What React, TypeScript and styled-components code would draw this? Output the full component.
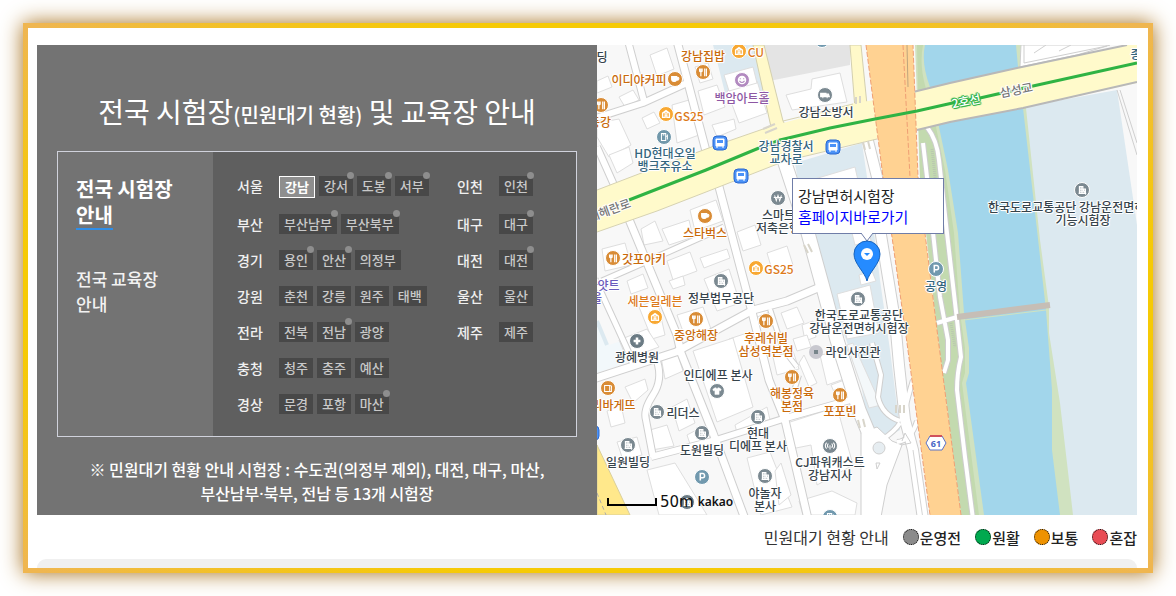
import React from "react";
import styled, { createGlobalStyle, css } from "styled-components";

const GlobalStyle = createGlobalStyle`
  * { box-sizing: border-box; }
  body {
    margin: 0;
    background: #fff;
    color: #333;
    font-family: "Noto Sans CJK KR", "Noto Sans", sans-serif;
  }
`;

const Frame = styled.main`
  margin: 23px;
  padding: 17px 11px 0 9px;
  border: 5px solid transparent;
  background:
    linear-gradient(#fff, #fff) padding-box,
    radial-gradient(ellipse farthest-corner, #f6ca05 71%, #efb650 98%) border-box;
  box-shadow: 0 0 20px #a56e19;
`;

const Columns = styled.div`
  display: grid;
  grid-template-columns: 28fr 27fr;
`;

const Panel = styled.section`
  padding: 45px 20px 10px;
  background: #737373;
  color: #fff;
`;

const Title = styled.h1`
  margin: 0 0 19px;
  font-size: 28px;
  font-weight: 400;
  line-height: 42px;
  text-align: center;

  small {
    font-size: 20px;
    font-weight: 500;
    line-height: 20px;
  }
`;

const Board = styled.div`
  display: grid;
  grid-template-columns: 155px 1fr;
  min-height: 286px;
  border: 1px solid #d0d2dc;
`;

const SideNav = styled.nav`
  padding: 24px 18px;
`;

const SideLink = styled.a<{ $active?: boolean }>`
  display: block;
  margin-bottom: 36px;
  color: #f2f2f2;
  font-size: 17px;
  font-weight: 500;
  line-height: 25px;
  text-decoration: none;

  ${(p) =>
    p.$active &&
    css`
      color: #fff;
      font-size: 20px;
      font-weight: 700;
      line-height: 26px;

      span {
        display: inline-block;
        height: 28px;
        border-bottom: 2px solid #2f8ee8;
      }
    `}
`;

const Regions = styled.div`
  display: grid;
  grid-template-columns: 220px 1fr;
  align-content: start;
  row-gap: 16px;
  padding: 24px 0 16px 24px;
  background: #5f5f5f;
`;

const Region = styled.div<{ $column: number }>`
  grid-column: ${(p) => p.$column};
  display: flex;
  align-items: flex-start;
  gap: 4px;
`;

const RegionName = styled.strong`
  width: 38px;
  color: #f0f0f0;
  font-size: 14px;
  font-weight: 500;
  line-height: 20px;
`;

const Place = styled.button<{ $active?: boolean }>`
  position: relative;
  padding: 0 5px;
  border: ${(p) => (p.$active ? "1px solid #fff" : "0")};
  background: ${(p) => (p.$active ? "#8e8e8e" : "#484848")};
  color: ${(p) => (p.$active ? "#fff" : "#c9c9c9")};
  font-family: inherit;
  font-size: 13px;
  font-weight: ${(p) => (p.$active ? 700 : 500)};
  line-height: 20px;
  white-space: nowrap;
  cursor: pointer;
`;

const Dot = styled.i`
  position: absolute;
  top: -4px;
  right: -1px;
  width: 7px;
  height: 7px;
  border-radius: 50%;
  background: #8e8e8e;
`;

const Note = styled.p`
  margin: 20px 0 0;
  font-size: 16px;
  font-weight: 500;
  line-height: 24px;
  text-align: center;
`;

const MiddleDot = styled.span`
  font-family: "Noto Sans", sans-serif;
  line-height: 16px;
`;

const MapView = styled.section`
  position: relative;
  overflow: hidden;
  background: #f8f8f8;
`;

const MapDrawing = styled.svg`
  position: absolute;
  top: 0;
  left: 0;
`;

const tones = {
  dark: "#36434b",
  food: "#c96a0b",
  store: "#dd7a1a",
  teal: "#34657d",
  art: "#8d57a3",
  hotel: "#6a5bbb",
  road: "#777777",
  subway: "#ffffff",
};
type Tone = keyof typeof tones;

const MapLabel = styled.span<{ $x: number; $y: number; $tone: Tone; $turn?: number; $start?: boolean }>`
  --halo: ${(p) => (p.$tone === "subway" ? "#31b44a" : "#fff")};
  position: absolute;
  left: ${(p) => p.$x}px;
  top: ${(p) => p.$y}px;
  transform: translate(${(p) => (p.$start ? "0" : "-50%")}, -50%) rotate(${(p) => p.$turn ?? 0}deg);
  color: ${(p) => tones[p.$tone]};
  font-size: 12px;
  font-weight: 500;
  line-height: 13px;
  text-align: center;
  white-space: pre;
  text-shadow:
    1px 0 var(--halo),
    -1px 0 var(--halo),
    0 1px var(--halo),
    0 -1px var(--halo),
    1px 1px 1px var(--halo),
    -1px -1px 1px var(--halo);
`;

const Bubble = styled.div`
  position: absolute;
  top: 133px;
  left: 195px;
  width: 152px;
  padding: 6px 5px;
  border: 1px solid #6f7da8;
  background: #fff;
  color: #222;
  font-size: 15px;
  line-height: 21px;
  white-space: nowrap;

  a {
    display: block;
    color: #00f;
    text-decoration: none;
  }
`;

const Marker = styled.svg`
  position: absolute;
  top: 187px;
  left: 255px;
`;

const Scale = styled.div`
  position: absolute;
  left: 10px;
  bottom: 3px;
  display: flex;
  align-items: center;
  gap: 3px;
  color: #111;
  font-family: "DejaVu Sans", sans-serif;
  font-size: 15px;
  line-height: 20px;

  i {
    width: 50px;
    height: 8px;
    border: 2px solid #000;
    border-top: 0;
  }
  b {
    margin-left: 1px;
    font-family: "Noto Sans", sans-serif;
    font-size: 12px;
    font-weight: 600;
  }
`;

const Legend = styled.div`
  display: flex;
  justify-content: flex-end;
  align-items: center;
  gap: 14px;
  height: 44px;
  font-size: 16px;
`;

const LegendItem = styled.span<{ $color: string }>`
  display: flex;
  align-items: center;
  gap: 1px;
  color: #222;
  font-size: 15px;
  font-weight: 500;

  &::before {
    content: "";
    width: 14px;
    height: 14px;
    border: 1px dotted #000;
    border-radius: 50%;
    background: ${(p) => p.$color};
  }
`;

const NextSection = styled.div`
  height: 9px;
  border-radius: 10px 10px 0 0;
  background: #f0f0f0;
`;

type PlaceData = [name: string, dot?: boolean];
const regions: { name: string; column: number; places: PlaceData[] }[] = [
  { name: "서울", column: 1, places: [["강남"], ["강서", true], ["도봉", true], ["서부", true]] },
  { name: "인천", column: 2, places: [["인천", true]] },
  { name: "부산", column: 1, places: [["부산남부", true], ["부산북부", true]] },
  { name: "대구", column: 2, places: [["대구", true]] },
  { name: "경기", column: 1, places: [["용인", true], ["안산", true], ["의정부"]] },
  { name: "대전", column: 2, places: [["대전", true]] },
  { name: "강원", column: 1, places: [["춘천"], ["강릉"], ["원주"], ["태백"]] },
  { name: "울산", column: 2, places: [["울산"]] },
  { name: "전라", column: 1, places: [["전북"], ["전남", true], ["광양"]] },
  { name: "제주", column: 2, places: [["제주"]] },
  { name: "충청", column: 1, places: [["청주"], ["충주"], ["예산"]] },
  { name: "경상", column: 1, places: [["문경"], ["포항"], ["마산", true]] },
];

type LabelData = { t: string; x: number; y: number; c: Tone; turn?: number; start?: boolean };
const labels: LabelData[] = [
  { t: "딩", x: 5, y: 11, c: "dark" },
  { t: "강남집밥", x: 106, y: 10, c: "food" },
  { t: "CU", x: 159, y: 6, c: "store" },
  { t: "이디야커피", x: 42, y: 34, c: "food" },
  { t: "백암아트홀", x: 145, y: 52, c: "art" },
  { t: "등강", x: 3, y: 76, c: "food" },
  { t: "GS25", x: 92, y: 70, c: "store" },
  { t: "HD현대오일\n뱅크주유소", x: 68, y: 114, c: "teal" },
  { t: "강남경찰서\n교차로", x: 189, y: 107, c: "teal" },
  { t: "강남소방서", x: 229, y: 66, c: "dark" },
  { t: "삼성교", x: 419, y: 44, c: "road", turn: -11 },
  { t: "2호선", x: 369, y: 55, c: "subway", turn: -11 },
  { t: "종", x: 539, y: 8, c: "teal" },
  { t: "테헤란로", x: 12, y: 164, c: "road", turn: -20 },
  { t: "스마트", x: 165, y: 169, c: "dark", start: true },
  { t: "저축은행", x: 159, y: 182, c: "dark", start: true },
  { t: "스타벅스", x: 108, y: 187, c: "food" },
  { t: "갓포아키", x: 47, y: 213, c: "food" },
  { t: "하얏트", x: 6, y: 239, c: "hotel" },
  { t: "서울", x: -6, y: 252, c: "hotel" },
  { t: "세븐일레븐", x: 58, y: 255, c: "store" },
  { t: "정부법무공단", x: 124, y: 252, c: "dark" },
  { t: "GS25", x: 182, y: 223, c: "store" },
  { t: "중앙해장", x: 99, y: 289, c: "food" },
  { t: "후레쉬빌\n삼성역본점", x: 169, y: 299, c: "food" },
  { t: "광혜병원", x: 40, y: 311, c: "dark" },
  { t: "한국도로교통공단\n강남운전면허시험장", x: 262, y: 276, c: "dark" },
  { t: "라인사진관", x: 256, y: 306, c: "dark" },
  { t: "인디에프 본사", x: 121, y: 329, c: "dark" },
  { t: "파리바게뜨", x: 11, y: 359, c: "food" },
  { t: "리더스", x: 86, y: 367, c: "dark" },
  { t: "해봉정육\n본점", x: 195, y: 354, c: "food" },
  { t: "포포빈", x: 243, y: 365, c: "food" },
  { t: "일원빌딩", x: 31, y: 416, c: "dark" },
  { t: "도원빌딩", x: 105, y: 404, c: "dark" },
  { t: "현대\n디에프 본사", x: 161, y: 394, c: "dark" },
  { t: "야놀자\n본사", x: 168, y: 454, c: "dark" },
  { t: "CJ파워캐스트\n강남지사", x: 233, y: 423, c: "dark" },
  { t: "공영", x: 339, y: 240, c: "teal" },
  { t: "한국도로교통공단 강남운전면허", x: 391, y: 161, c: "dark", start: true },
  { t: "기능시험장", x: 486, y: 174, c: "dark" },
];

const glyphs = {
  fork: <path d="M-4-4v2.500q0 1.500 1.500 1.500t1.500-1.500V-4M-2.500-4v9M2-4v9M4-4v9" strokeWidth="1.400" />,
  cafe: <path d="M-4-3H2V0Q2 3-1 3T-4 0ZM2-2H3Q5-2 4.500 0T2 1" fill="#fff" />,
  store: <path d="M-4 4V-1L0-4 4-1V4H1V1H-1V4ZM-2-1H2" strokeWidth="1.600" />,
  office: <path d="M-3 4V-4H1V4M1-1H4V4ZM-4 4H5M-1-4V4M-3-1H1M-3 1.500H4" strokeWidth="1.400" />,
  plus: <path d="M0-4V4M-4 0H4" strokeWidth="3" />,
  smile: (
    <>
      <circle r="5" fill="#fff" stroke="none" />
      <path d="M-2-2V-1M2-2V-1M-3 1Q0 5 3 1" stroke="#b28ac0" />
    </>
  ),
  fuel: <path d="M-3 4V-4H2V4ZM2-1H4V3M4-3V0M-1.500-2.500H.5" />,
  truck: <path d="M-5-2H1V2H-5ZM1-1H4L5 2H1M-3 3h1M2 3h1" fill="#fff" strokeWidth="1.500" />,
  won: <path d="M-4-3-2 3 0-3 2 3 4-3M-5-.5H5" />,
  shirt: <path d="M-2-4-5-2-4 0-2.500-.5V4H2.500V-.5L4 0 5-2 2-4Q0-2-2-4Z" fill="#fff" strokeWidth=".5" />,
  bread: <path d="M-4-3H2V4H-4ZM2-3Q5-3 4 0V4H2" />,
  antenna: <path d="M0-1V4M-2-3Q-4-.5-2 2M2-3Q4-.5 2 2M-4-4Q-7 0-4 3M4-4Q7 0 4 3" />,
  park: <path d="M-2 4V-4H1Q3-4 3-1.500T1 1H-2" strokeWidth="1.800" />,
};

type Glyph = keyof typeof glyphs;
const pins: [Glyph, number, number, string][] = [
  ["fork", 106, 27, "#d98c36"],
  ["store", 142, 6, "#f8a832"],
  ["cafe", 78, 34, "#d98c36"],
  ["smile", 145, 35, "#b28ac0"],
  ["fork", 4, 60, "#d98c36"],
  ["store", 69, 69, "#f8a832"],
  ["fuel", 67, 92, "#7198ab"],
  ["truck", 228, 50, "#7b8991"],
  ["won", 181, 153, "#7b8991"],
  ["cafe", 108, 171, "#d98c36"],
  ["fork", 16, 213, "#d98c36"],
  ["store", 58, 272, "#f8a832"],
  ["office", 124, 236, "#7b8991"],
  ["store", 159, 223, "#f8a832"],
  ["fork", 99, 274, "#d98c36"],
  ["fork", 169, 276, "#d98c36"],
  ["plus", 40, 296, "#6b7b84"],
  ["office", 261, 254, "#7b8991"],
  ["shirt", 120, 346, "#7b8991"],
  ["bread", 11, 343, "#d98c36"],
  ["office", 60, 367, "#7b8991"],
  ["fork", 195, 332, "#d98c36"],
  ["fork", 243, 350, "#d98c36"],
  ["office", 31, 400, "#7b8991"],
  ["office", 105, 388, "#7b8991"],
  ["office", 161, 372, "#7b8991"],
  ["park", 105, 432, "#7199ae"],
  ["office", 168, 431, "#7b8991"],
  ["antenna", 233, 401, "#7b8991"],
  ["park", 339, 224, "#7199ae"],
  ["office", 485, 145, "#7b8991"],
  ["fuel", 233, 472, "#7199ae"],
  ["park", 225, -5, "#7199ae"],
  ["office", 90, 457, "#6b7b84"],
];

const busStops = [
  [123, 98],
  [144, 131],
  [236, 102],
  [-5, 388],
];

const buildings = [
  "M0 36 11 31 15 42 0 48Z",
  "M22 52 36 45 42 55 28 62Z",
  "M53 10 70 3 77 24 60 31Z",
  "M45 73 57 67 63 78 50 84Z",
  "M75 60 92 55 102 90 80 98Z",
  "M0 78 22 74 34 100 12 112 0 92Z",
  "M12 110 32 102 36 118 20 128Z",
  "M101 46 120 40 128 62 107 70Z",
  "M115 80 137 74 139 84 120 92Z",
  "M130 46 160 36 170 68 142 78Z",
  "M127 30 156 22 160 38 132 46Z",
  "M98 22 111 18 116 34 103 38Z",
  "M189 50 214 44 215 34 243 28 250 57 195 65Z",
  "M44 184 58 176 66 196 47 200Z",
  "M65 184 92 175 96 192 72 200Z",
  "M93 165 119 155 126 176 98 186Z",
  "M5 204 28 198 34 220 8 226Z",
  "M70 216 93 207 100 226 76 235Z",
  "M103 213 130 204 133 213 107 223Z",
  "M140 187 158 180 164 200 146 206Z",
  "M170 208 190 201 196 220 176 228Z",
  "M30 236 46 229 51 243 34 249Z",
  "M72 236 86 231 88 240 76 244Z",
  "M107 234 132 224 143 258 120 266Z",
  "M80 270 106 262 114 284 88 292Z",
  "M42 262 60 254 68 290 55 294Z",
  "M22 295 50 284 62 302 30 314Z",
  "M132 294 150 288 156 306 137 312Z",
  "M158 263 172 258 175 266 160 272Z",
  "M184 268 200 262 207 278 190 284Z",
  "M96 306 136 293 156 362 120 377Z",
  "M64 312 80 307 86 326 68 334Z",
  "M28 342 48 334 51 345 36 358Z",
  "M10 366 24 360 28 378 14 382Z",
  "M53 385 70 380 77 401 55 405Z",
  "M75 362 90 354 98 378 82 386Z",
  "M20 397 40 392 45 410 26 415Z",
  "M90 390 107 381 115 397 94 402Z",
  "M50 425 78 418 110 470 62 470Z",
  "M138 380 170 362 173 375 140 388Z",
  "M150 413 173 407 195 462 164 470Z",
  "M190 378 240 362 256 420 220 440 214 400 194 404Z",
  "M205 280 216 276 219 292 208 296Z",
  "M196 294 210 290 214 302 200 306Z",
  "M223 310 240 307 247 334 230 340Z",
  "M207 310 220 338 212 342 202 318Z",
  "M234 340 250 334 256 350 241 356Z",
  "M202 456 235 446 260 458 258 470H206Z",
  "M184 418 194 450 182 460 178 426Z",
  "M176 312 196 306 202 324 180 330Z",
];

const streets: [string, number][] = [
  ["M80-4 109 106M121 138 154 263 172 335 188 375 211 474", 7],
  ["M30-8 48 60M0 102 17 140M-4 74 46 58 90 38", 6],
  ["M31 172 80 290 84 308 116 388 148 474", 7],
  ["M5 236 62 211 127 182M-2 234 32 308 36 320", 5],
  ["M-4 334 79 307 156 265 190 256 228 240", 7],
  ["M60 316Q66 335 56 350T49 375L56 412", 6],
  ["M54 412 119 395 189 373 253 355", 6],
  ["M173 264 186 304 200 322M202 330 188 375", 4],
];

const PoiPin = ({ pin: [glyph, x, y, color] }: { pin: [Glyph, number, number, string] }) => (
  <g transform={`translate(${x} ${y})`}>
    <circle r="7.500" fill={color} stroke="#fff" strokeWidth="1" />
    <g transform="scale(.85)" fill="none" stroke="#fff" strokeWidth="1.200">
      {glyphs[glyph]}
    </g>
  </g>
);

const StreetMap = () => (
  <MapDrawing width="540" height="470" viewBox="0 0 540 470" aria-hidden="true">
    <rect width="540" height="470" fill="#f8f8f8" />
    <g fill="#dce9f0">
      <path d="M116 0H160L172 45 130 56ZM0 326 0 318 20 310 22 318Z" />
      <path d="M198 118 265 98 270 132 283 235 293 305 303 385 290 392 272 388 263 332 228 238 205 160Z" />
      <path d="M426 62 520 45 540 180V470H470L440 190Z" />
    </g>
    <path d="M0 276 12 300 30 294 34 316 0 328Z" fill="#f2f8fb" />
    <path d="M0 276 10 300" stroke="#dce9f0" strokeWidth="4" />
    <path d="M164 0H253V20L172 36Z" fill="#e4e4e4" />
    <g fill="#fff" stroke="#dedede" strokeWidth="1">
      {buildings.map((d) => (
        <path key={d} d={d} />
      ))}
      <path d="M204 138 258 122 262 140 218 160ZM240 249 273 240 282 288 250 294ZM262 230 275 226 279 236 264 240ZM253 180 270 176 274 196 258 200Z" />
      <path d="M250 300 256 298 284 360 272 363Z" fill="#f4f8fa" />
    </g>

    {/* streets: grey casing first, then the white surface */}
    <g fill="none" strokeLinejoin="round">
      {streets.map(([d, w]) => (
        <path key={d} d={d} stroke="#cfcfcf" strokeWidth={w + 2} />
      ))}
      <path d="M186 112 211 188 228 250 240 295 262 365 275 396" stroke="#cfcfcf" strokeWidth="15" />
      <path d="M269 88 280 132 284 190 298 275 302 320 308 375 316 405 326 474" stroke="#cfcfcf" strokeWidth="12" />
      <path d="M275 298 284 330 281 352Q285 370 303 376M303 378Q298 386 286 394M316 335Q310 355 308 365M320 376Q314 396 300 397" stroke="#cfcfcf" strokeWidth="6" />
      <path d="M264 388 280 382 295 396 305 400 290 440 284 472H264Z" fill="#fff" stroke="#cfcfcf" />
      {streets.map(([d, w]) => (
        <path key={d} d={d} stroke="#fff" strokeWidth={w} />
      ))}
      <path d="M186 112 211 188 228 250 240 295 262 365 275 396" stroke="#fff" strokeWidth="13" />
      <path d="M269 88 280 132 284 190 298 275 302 320 308 375 316 405 326 474" stroke="#fff" strokeWidth="10" />
      <path d="M275 298 284 330 281 352Q285 370 303 376M303 378Q298 386 286 394M316 335Q310 355 308 365M320 376Q314 396 300 397" stroke="#fff" strokeWidth="4" />
      <path d="M305 396 308 388 314 398 304 400M279 418h4l-3 6Z" stroke="#cfcfcf" />
      <path d="M316 405 326 474" stroke="#d4d4d4" />
    </g>
    <circle cx="282" cy="403" r="6" fill="#e6edf1" stroke="#cfcfcf" />

    {/* river and its banks */}
    <path d="M318 0H424L429 63 443 195 452 262 452 288 463 358 470 418 476 470H364L340 285 323 133Z" fill="#d0e2c0" />
    <path d="M330 0H328Q324 18 333 42L342 82 351 125 361 188 367 268 372 303V328L369 338 387 470H463L455 405V345L449 265 440 185 426 63 421 22 419 0Z" fill="#a2d6eb" />
    <path d="M320 0H326Q322 20 329 44L339 82 348 125 357 188 363 268 368 303V328L365 338 382 470H364L340 285 323 133Z" fill="#c3daaf" />
    <g fill="none">
      <path d="M330 82Q340 95 342 115L350 188 360 275 364 312Q360 328 360 345L368 412 376 474M326 98 330 132 343 252 351 295V315L347 328M340 278 360 272" stroke="#cdcdcd" strokeWidth="6" />
      <path d="M330 82Q340 95 342 115L350 188 360 275 364 312Q360 328 360 345L368 412 376 474M326 98 330 132 343 252 351 295V315L347 328M340 278 360 272" stroke="#fff" strokeWidth="4" />
      <path d="M335 104 340 150M354 278 358 302" stroke="#b9c7b0" strokeWidth="3" strokeDasharray="1 1" />
      <path d="M360 272 453 260" stroke="#c6beb6" strokeWidth="6" />
      <path d="M367 275 449 265" stroke="#d0e2c0" strokeWidth="1" />
    </g>
    <path d="M424 0H513L480 10 423 22Z" fill="#fff" stroke="#cfcfcf" />
    <path d="M427 0V18L510 1M437 8 449 0M462 6 474 0M520 45 540 110M523 45 540 98" fill="none" stroke="#cfcfcf" />

    {/* main roads */}
    <g fill="#fff9c9" stroke="#d3cfae">
      <path d="M156 0H167L186 76 194 90 176 100 174 82ZM253 0H264L270 60 258 64Z" />
    </g>
    <path d="M0 145 60 122 120 100 172 82 258 58 278 55 316 47 353 38 420 23 530 0H540V38L426 63 353 77 320 85 280 94 243 102 188 116 109 147 60 166 0 187Z" fill="#fffacb" />
    <path d="M0 145 60 122 120 100 172 82M186 76 256 59M0 187 60 166 109 147 188 116 280 94" fill="none" stroke="#d6d2b2" />
    <path d="M316 47 353 38 420 23 530 0M320 85 353 77 426 63 540 37" fill="none" stroke="#b8b8b8" strokeWidth="2" />
    <path d="M0 400 33 470H0Z" fill="#ffe88b" stroke="#d9cf9b" />
    <path d="M0 448 9 470" stroke="#aaa" strokeDasharray="4 3" />
    <path d="M166 84 178 79M168 88 180 83M259 52v7M263 51v7M266 97l2 8M271 96l2 8M207 200l4 8M211 199l4 8M299 360v8M303 360v8M307 360v8M261 375l2 8M266 374l2 8" stroke="#d8d5ca" strokeWidth="2" />

    {/* expressway */}
    <path d="M269 0 286 132 295 192 310 298 333 470H364L340 285 321 132 316 0Z" fill="#ffd292" />
    <path d="M269 0 286 132 295 192 310 298 333 470M364 470 340 285 321 132 316 0M306 0 308 38 313 132" fill="none" stroke="#ef9f74" strokeDasharray="5 2" />
    <path d="M310 0 311 42" stroke="#bda57d" />

    <path d="M32 155 109 125 162 103 183 95 233 83 278 74 320 66 360 57 383 53 436 41 540 18" fill="none" stroke="#2fb344" strokeWidth="3" />

    {busStops.map(([x, y]) => (
      <g key={x} transform={`translate(${x} ${y})`}>
        <rect x="-7" y="-7" width="14" height="14" rx="4" fill="#4b92f7" stroke="#2b68cf" />
        <path d="M-4-4H4V3H-4ZM-3 3V5M3 3V5" fill="#fff" stroke="#fff" />
        <path d="M-3-3H3V0H-3Z" fill="#4b92f7" />
      </g>
    ))}
    {pins.map((pin) => (
      <PoiPin key={`${pin[1]}-${pin[2]}`} pin={pin} />
    ))}
    <circle cx="219" cy="307" r="7" fill="#c8c8cf" />
    <rect x="217" y="305" width="4" height="4" fill="#77858b" />
    <path d="M333 391H345L349 398 345 405H333L329 398Z" fill="#fff" stroke="#5a72c8" />
    <path d="M333 391H345" stroke="#d0525d" strokeWidth="2" />
    <text x="339" y="402" textAnchor="middle" fontFamily="Noto Sans" fontSize="9" fontWeight="700" fill="#4864c5">
      61
    </text>
  </MapDrawing>
);

const App = () => (
  <>
    <GlobalStyle />
    <Frame>
      <Columns>
        <Panel>
          <Title>
            전국 시험장<small>(민원대기 현황)</small> 및 교육장 안내
          </Title>
          <Board>
            <SideNav>
              <SideLink href="#test" $active>
                전국 시험장
                <br />
                <span>안내</span>
              </SideLink>
              <SideLink href="#education">
                전국 교육장
                <br />
                안내
              </SideLink>
            </SideNav>
            <Regions>
              {regions.map((region) => (
                <Region key={region.name} $column={region.column}>
                  <RegionName>{region.name}</RegionName>
                  {region.places.map(([name, dot]) => (
                    <Place key={name} type="button" $active={name === "강남"}>
                      {name}
                      {dot && <Dot />}
                    </Place>
                  ))}
                </Region>
              ))}
            </Regions>
          </Board>
          <Note>
            ※ 민원대기 현황 안내 시험장 : 수도권(의정부 제외), 대전, 대구, 마산,
            <br />
            부산남부<MiddleDot>·</MiddleDot>북부, 전남 등 13개 시험장
          </Note>
        </Panel>
        <MapView aria-label="지도">
          <StreetMap />
          {labels.map((l) => (
            <MapLabel key={`${l.t}-${l.x}`} $x={l.x} $y={l.y} $tone={l.c} $turn={l.turn} $start={l.start}>
              {l.t}
            </MapLabel>
          ))}
          <Bubble>
            강남면허시험장
            <a href="#home">홈페이지바로가기</a>
          </Bubble>
          <Marker width="30" height="52" viewBox="0 0 30 52" aria-hidden="true">
            <path d="M9 1 15 9 21 1" fill="#fff" stroke="#6f7da8" />
            <path d="M10 0H20V2H10Z" fill="#fff" />
            <path d="M15 49C13 40 2 32 2 22A13 13 0 0 1 28 22C28 32 17 40 15 49Z" fill="#258bff" stroke="#1763bd" />
            <circle cx="15" cy="22" r="6" fill="#fff" />
            <path d="M12 21H18L15 24Z" fill="#258bff" />
          </Marker>
          <Scale>
            <i />
            50m
            <b>kakao</b>
          </Scale>
        </MapView>
      </Columns>
      <Legend>
        민원대기 현황 안내
        <LegendItem $color="#8b8b8b">운영전</LegendItem>
        <LegendItem $color="#00a94f">원활</LegendItem>
        <LegendItem $color="#ee9200">보통</LegendItem>
        <LegendItem $color="#e84c55">혼잡</LegendItem>
      </Legend>
      <NextSection />
    </Frame>
  </>
);

export default App;
